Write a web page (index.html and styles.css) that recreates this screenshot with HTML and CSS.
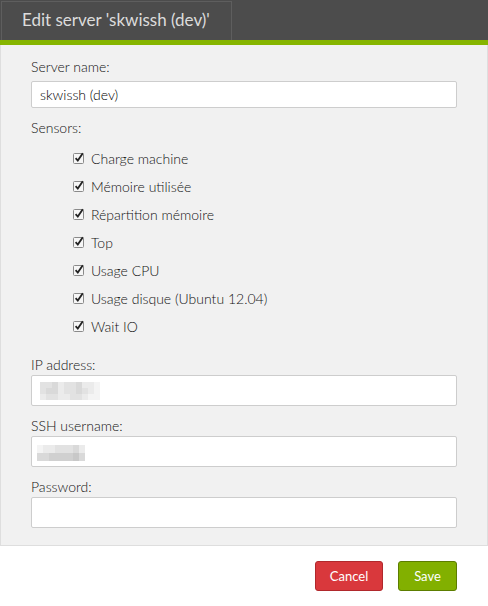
FILE: index.html
```html
<!DOCTYPE html>
<html>
<head>
<meta charset="utf-8">
<link rel="stylesheet" href="styles.css">
</head>
<body>
<div class="dialog">
  <div class="header">
    <div class="tab">Edit server 'skwissh (dev)'</div>
  </div>
  <div class="accent"></div>
  <div class="content">
    <label class="label">Server name:</label>
    <div class="input input-first">skwissh (dev)</div>

    <label class="label label-sensors">Sensors:</label>
    <ul class="sensors">
      <li><svg class="cb" width="12" height="12" viewBox="0 0 12 12"><rect x="0.5" y="1.5" width="10" height="10" rx="1" fill="#f6f6f6" stroke="#8a8a8a"/><path d="M2.6 6.2 L4.8 8.6 L9.8 1.2" fill="none" stroke="#222" stroke-width="1.8"/></svg>Charge machine</li>
      <li><svg class="cb" width="12" height="12" viewBox="0 0 12 12"><rect x="0.5" y="1.5" width="10" height="10" rx="1" fill="#f6f6f6" stroke="#8a8a8a"/><path d="M2.6 6.2 L4.8 8.6 L9.8 1.2" fill="none" stroke="#222" stroke-width="1.8"/></svg>Mémoire utilisée</li>
      <li><svg class="cb" width="12" height="12" viewBox="0 0 12 12"><rect x="0.5" y="1.5" width="10" height="10" rx="1" fill="#f6f6f6" stroke="#8a8a8a"/><path d="M2.6 6.2 L4.8 8.6 L9.8 1.2" fill="none" stroke="#222" stroke-width="1.8"/></svg>Répartition mémoire</li>
      <li><svg class="cb" width="12" height="12" viewBox="0 0 12 12"><rect x="0.5" y="1.5" width="10" height="10" rx="1" fill="#f6f6f6" stroke="#8a8a8a"/><path d="M2.6 6.2 L4.8 8.6 L9.8 1.2" fill="none" stroke="#222" stroke-width="1.8"/></svg>Top</li>
      <li><svg class="cb" width="12" height="12" viewBox="0 0 12 12"><rect x="0.5" y="1.5" width="10" height="10" rx="1" fill="#f6f6f6" stroke="#8a8a8a"/><path d="M2.6 6.2 L4.8 8.6 L9.8 1.2" fill="none" stroke="#222" stroke-width="1.8"/></svg>Usage CPU</li>
      <li><svg class="cb" width="12" height="12" viewBox="0 0 12 12"><rect x="0.5" y="1.5" width="10" height="10" rx="1" fill="#f6f6f6" stroke="#8a8a8a"/><path d="M2.6 6.2 L4.8 8.6 L9.8 1.2" fill="none" stroke="#222" stroke-width="1.8"/></svg>Usage disque (Ubuntu 12.04)</li>
      <li><svg class="cb" width="12" height="12" viewBox="0 0 12 12"><rect x="0.5" y="1.5" width="10" height="10" rx="1" fill="#f6f6f6" stroke="#8a8a8a"/><path d="M2.6 6.2 L4.8 8.6 L9.8 1.2" fill="none" stroke="#222" stroke-width="1.8"/></svg>Wait IO</li>
    </ul>

    <label class="label">IP address:</label>
    <div class="input">
      <div class="mosaic mosaic-ip">
        <span class="m2"></span><span class="m2"></span><span class="m3"></span><span class="m1"></span><span class="m2"></span><span class="m2"></span><span class="m3"></span><span class="m1"></span><span class="m1"></span><span class="m0"></span>
        <span class="m2"></span><span class="m3"></span><span class="m3"></span><span class="m1"></span><span class="m2"></span><span class="m2"></span><span class="m3"></span><span class="m2"></span><span class="m1"></span><span class="m0"></span>
        <span class="m1"></span><span class="m2"></span><span class="m2"></span><span class="m1"></span><span class="m1"></span><span class="m2"></span><span class="m2"></span><span class="m1"></span><span class="m0"></span><span class="m0"></span>
      </div>
    </div>

    <label class="label">SSH username:</label>
    <div class="input">
      <div class="mosaic mosaic-ssh">
        <span class="m0"></span><span class="m1"></span><span class="m1"></span><span class="m2"></span><span class="m2"></span><span class="m2"></span><span class="m3"></span><span class="m1"></span>
        <span class="m3"></span><span class="m3"></span><span class="m4"></span><span class="m4"></span><span class="m4"></span><span class="m4"></span><span class="m5"></span><span class="m3"></span>
      </div>
    </div>

    <label class="label">Password:</label>
    <div class="input"></div>
  </div>
  <div class="footer">
    <button class="btn btn-cancel">Cancel</button>
    <button class="btn btn-save">Save</button>
  </div>
</div>
</body>
</html>
```

FILE: styles.css
```css
html, body {
  margin: 0;
  padding: 0;
  background: #ffffff;
}

body {
  font-family: Lato, "Open Sans", sans-serif;
  font-weight: 300;
  color: #111;
}

.dialog {
  width: 488px;
  height: 606px;
  display: flex;
  flex-direction: column;
}

.header {
  height: 40px;
  background: #4c4c4c;
  padding: 1px 0 0 1px;
  box-sizing: border-box;
  display: flex;
}

.tab {
  width: 231px;
  height: 39px;
  box-sizing: border-box;
  border: 1px solid #5e5e5e;
  border-bottom: none;
  color: #dcdcdc;
  font-size: 17px;
  font-weight: 400;
  line-height: 36px;
  padding-left: 20px;
  white-space: nowrap;
}

.accent {
  height: 5px;
  background: #86b500;
}

.content {
  height: 501px;
  box-sizing: border-box;
  background: #f1f1f1;
  border: 1px solid #dedede;
  border-top: none;
  padding: 12px 30px 0 30px;
  display: flex;
  flex-direction: column;
}

.label {
  display: block;
  height: 20px;
  line-height: 20px;
  font-size: 14px;
  color: #111;
}

.input {
  height: 31px;
  box-sizing: border-box;
  background: #fff;
  border: 1px solid #cdcdcd;
  border-radius: 2px;
  margin-bottom: 10px;
  padding-left: 8px;
  font-size: 14px;
  font-weight: 300;
  color: #000;
  display: flex;
  align-items: center;
}

.input-first {
  height: 27px;
  margin-top: 4px;
  margin-bottom: 10px;
}

.label-sensors {
  margin-bottom: 6px;
}

.sensors {
  list-style: none;
  margin: 0 0 15px 0;
  padding: 0 0 0 42px;
}

.sensors li {
  height: 28px;
  display: flex;
  align-items: center;
  font-size: 14px;
  color: #111;
}

.cb {
  margin-right: 6px;
  flex: none;
}

.mosaic {
  display: grid;
}

.mosaic span {
  display: block;
}

.mosaic-ip {
  grid-template-columns: repeat(10, 6px);
  grid-template-rows: repeat(3, 6px);
  margin-top: 1px;
}

.mosaic-ssh {
  grid-template-columns: repeat(8, 6px);
  grid-template-rows: repeat(2, 8px);
  margin-left: -3px;
  margin-top: 2px;
}

.m0 { background: #f4f4f4; }
.m1 { background: #ebebeb; }
.m2 { background: #e2e2e2; }
.m3 { background: #d9d9d9; }
.m4 { background: #d0d0d0; }
.m5 { background: #c8c8c8; }

.footer {
  flex: 1;
  display: flex;
  justify-content: flex-end;
  align-items: flex-start;
  gap: 15px;
  padding: 15px 31px 0 0;
}

.btn {
  height: 30px;
  box-sizing: border-box;
  border-radius: 3px;
  font-family: Lato, "Open Sans", sans-serif;
  font-weight: 400;
  font-size: 13px;
  color: #fff;
  padding: 0;
  cursor: pointer;
}

.btn-cancel {
  width: 68px;
  background: #d9383c;
  border: 1px solid #b0282c;
}

.btn-save {
  width: 59px;
  background: #82b000;
  border: 1px solid #5c7d00;
}
```
